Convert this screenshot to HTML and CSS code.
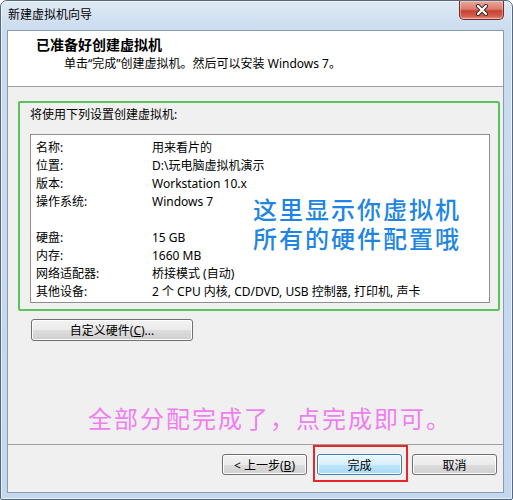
FILE: index.html
```html
<!DOCTYPE html>
<html lang="zh-CN">
<head>
    <meta charset="UTF-8">
    <title>新建虚拟机向导</title>
    <link rel="stylesheet" href="styles.css">
</head>
<body>
    <!-- Wizard window -->
    <div class="window">
        <div class="titlebar">
            <span class="title">新建虚拟机向导</span>
            <button class="close-btn" title="关闭">
                <svg width="14" height="12" viewBox="0 0 14 12">
                    <path d="M3 2 L11 10 M11 2 L3 10" stroke="#3a2a2a" stroke-width="4" stroke-linecap="round"/>
                    <path d="M3 2 L11 10 M11 2 L3 10" stroke="#fff" stroke-width="2.2" stroke-linecap="round"/>
                </svg>
            </button>
        </div>

        <div class="client">
            <!-- Page header -->
            <div class="header">
                <div class="header-title">已准备好创建虚拟机</div>
                <div class="header-sub">单击“完成”创建虚拟机。然后可以安装 Windows 7。</div>
            </div>

            <!-- Summary -->
            <div class="content">
                <div class="settings">
                    <div class="settings-caption">将使用下列设置创建虚拟机:</div>
                    <div class="summary">
                        <span>名称:</span><span>用来看片的</span>
                        <span>位置:</span><span>D:\玩电脑虚拟机演示</span>
                        <span>版本:</span><span>Workstation 10.x</span>
                        <span>操作系统:</span><span>Windows 7</span>
                        <span></span><span></span>
                        <span>硬盘:</span><span>15 GB</span>
                        <span>内存:</span><span>1660 MB</span>
                        <span>网络适配器:</span><span>桥接模式 (自动)</span>
                        <span>其他设备:</span><span>2 个 CPU 内核, CD/DVD, USB 控制器, 打印机, 声卡</span>
                        <div class="note">这里显示你虚拟机<br>所有的硬件配置哦</div>
                    </div>
                </div>
                <button class="btn custom-btn">自定义硬件(<u>C</u>)...</button>
                <p class="hint">全部分配完成了，点完成即可。</p>
            </div>

            <!-- Buttons -->
            <div class="footer">
                <button class="btn">&lt; 上一步(<u>B</u>)</button>
                <span class="finish-wrap"><button class="btn btn-default">完成</button></span>
                <button class="btn">取消</button>
            </div>
        </div>
    </div>
</body>
</html>
```

FILE: styles.css
```css
body {
    margin: 0;
    background: #fff;
    font-family: "Noto Sans", "Noto Sans CJK SC", sans-serif;
    font-size: 12px;
    color: #000;
}

.window {
    box-sizing: border-box;
    width: 513px;
    height: 500px;
    padding: 0 8px 6px 6px;
    border: 1px solid #56697e;
    border-radius: 7px 7px 2px 2px;
    background: linear-gradient(#dfe9f5 0, #cadcef 30px, #c3d7ee 100%);
    box-shadow: inset 0 0 0 1px rgba(255, 255, 255, 0.6);
    display: flex;
    flex-direction: column;
}

.titlebar {
    height: 29px;
    display: flex;
    align-items: flex-start;
}

.title {
    padding: 6px 0 0 1px;
    line-height: 16px;
    color: #000;
}

.close-btn {
    margin-left: auto;
    width: 45px;
    height: 19px;
    padding: 0;
    border: 1px solid #6b2e28;
    border-top: none;
    border-radius: 0 0 5px 5px;
    background: linear-gradient(#e9a89d 0%, #dc7b6b 45%, #c8412f 55%, #d3604e 85%, #e89a86 100%);
    box-shadow: inset 0 0 0 1px rgba(255, 255, 255, 0.35);
    display: flex;
    align-items: center;
    justify-content: center;
}

.client {
    flex: 1;
    display: flex;
    flex-direction: column;
    border: 1px solid #8a9bb0;
    background: #f0f0f0;
}

.header {
    height: 56px;
    box-sizing: border-box;
    padding: 5px 0 0 28px;
    background: #fff;
    border-bottom: 1px solid #a0a0a0;
}

.header-title {
    font-size: 14px;
    font-weight: bold;
    line-height: 18px;
}

.header-sub {
    margin: 2px 0 0 28px;
    line-height: 16px;
}

.content {
    flex: 1;
    padding: 14px 3px 0 10px;
}

.settings {
    border: 2px solid #5cc35c;
    border-radius: 2px;
    padding: 4px 8px 6px 10px;
}

.settings-caption {
    line-height: 16px;
    margin-bottom: 11px;
}

.summary {
    position: relative;
    display: grid;
    grid-template-columns: 116px 1fr;
    grid-auto-rows: 18px;
    align-items: center;
    justify-items: start;
    padding: 3px 0 2px 5px;
    background: #fff;
    border: 1px solid #8e8f8f;
}

.summary span {
    white-space: nowrap;
}

.note {
    position: absolute;
    left: 222px;
    top: 59px;
    font-family: "Noto Sans CJK SC", sans-serif;
    font-size: 24px;
    font-weight: 500;
    line-height: 29px;
    letter-spacing: 2px;
    color: #1e86e2;
}

.btn {
    box-sizing: border-box;
    height: 21px;
    padding: 0;
    font-family: inherit;
    font-size: 12px;
    color: #000;
    border: 1px solid #707070;
    border-radius: 3px;
    background: linear-gradient(#f2f2f2 0%, #ebebeb 50%, #dddddd 51%, #cfcfcf 100%);
    box-shadow: inset 0 0 0 1px #fcfcfc;
}

.custom-btn {
    display: block;
    width: 162px;
    height: 22px;
    margin: 8px 0 0 13px;
}

.hint {
    margin: 62px 0 0 70px;
    font-family: "Noto Sans CJK SC", sans-serif;
    font-size: 24px;
    line-height: 30px;
    letter-spacing: 2px;
    color: #f07ef0;
}

.footer {
    height: 38px;
    border-top: 1px solid #a0a0a0;
    display: flex;
    align-items: flex-start;
    justify-content: flex-end;
    gap: 10px;
    padding: 9px 6px 0 0;
}

.footer .btn {
    width: 85px;
}

.finish-wrap {
    position: relative;
    display: block;
}

/* red marker round the finish button */
.finish-wrap::after {
    content: "";
    position: absolute;
    left: -4px;
    right: -6px;
    top: -9px;
    bottom: -7px;
    border: 2px solid #e5262b;
}

.btn-default {
    display: block;
    border-color: #3c7fb1;
    background: linear-gradient(#eaf6fd 0%, #d9f0fc 50%, #bee6fd 51%, #a7d9f5 100%);
}
```
